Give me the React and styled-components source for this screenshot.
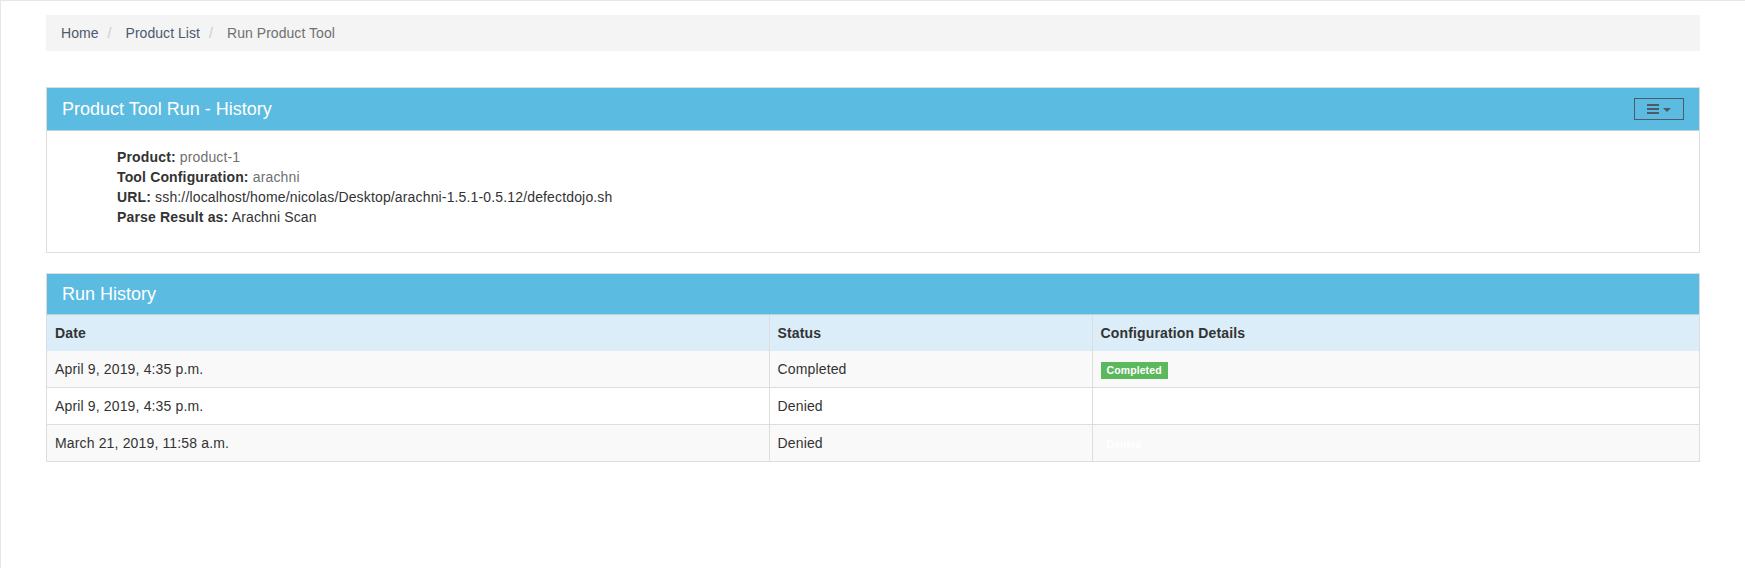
import React from 'react';
import styled, { createGlobalStyle } from 'styled-components';

const GlobalStyle = createGlobalStyle`
  body {
    margin: 0;
    font-family: "Liberation Sans", Arial, sans-serif;
    font-size: 14px;
    line-height: 20px;
    letter-spacing: 0.15px;
    color: #333;
    background: #fff;
  }
`;

const PageWrapper = styled.div`
  min-height: 100vh;
  box-sizing: border-box;
  border-top: 1px solid #e7e7e7;
  border-left: 1px solid #e7e7e7;
  padding: 14px 45px 0 45px;
`;

const Breadcrumb = styled.ol`
  list-style: none;
  display: flex;
  margin: 0 0 36px;
  padding: 8px 15px;
  background: #f4f4f4;
  letter-spacing: 0.05px;
`;

const Crumb = styled.li`
  color: ${(p) => (p.$active ? '#707070' : '#4b5a6e')};
`;

const Separator = styled.li`
  color: #ccc;
  padding: 0 14px 0 9px;
`;

const Panel = styled.section`
  background: #fff;
  border: 1px solid #ddd;
  margin-bottom: 20px;
`;

const PanelHeading = styled.div`
  display: flex;
  align-items: center;
  justify-content: space-between;
  padding: 10px 15px;
  background: #5bbbe0;
  color: #fff;
  border-bottom: 1px solid #b9d3de;
`;

const PanelTitle = styled.h3`
  margin: 0;
  font-size: 18px;
  line-height: 20px;
  font-weight: 400;
  letter-spacing: 0;
`;

const MenuButton = styled.button`
  display: flex;
  align-items: center;
  justify-content: center;
  gap: 4px;
  width: 50px;
  height: 22px;
  box-sizing: border-box;
  padding: 0;
  border: 1px solid #4f5a68;
  background: transparent;
  cursor: pointer;

  svg.caret {
    margin-top: 2px;
  }
`;

const PanelBody = styled.div`
  padding: 16px 15px 25px 70px;
`;

const InfoLine = styled.div`
  b {
    font-weight: 700;
  }
`;

const InfoValue = styled.span`
  color: ${(p) => (p.$muted ? '#707070' : '#333')};
`;

const Table = styled.table`
  width: 100%;
  border-collapse: collapse;
  table-layout: fixed;
`;

const Row = styled.tr`
  background: ${(p) => (p.$head ? '#daedf8' : p.$striped ? '#f9f9f9' : '#fff')};
  border-bottom: 1px solid #ddd;

  &:last-child {
    border-bottom: none;
  }
`;

const Th = styled.th`
  padding: 8px;
  text-align: left;
  font-weight: 700;
  border-left: 1px solid #ddd;

  &:first-child {
    border-left: none;
  }
`;

const Td = styled.td`
  padding: 8px;
  vertical-align: top;
  border-left: 1px solid #ddd;

  &:first-child {
    border-left: none;
  }
`;

const Label = styled.span`
  display: inline;
  padding: 2px 6px 3px;
  font-size: 10.5px;
  font-weight: 700;
  line-height: 1;
  letter-spacing: 0.1px;
  color: #fff;
  background: ${(p) => p.$bg || 'transparent'};
`;

const BarsIcon = () => (
  <svg width="12" height="10" viewBox="0 0 12 10">
    <rect x="0" y="0" width="12" height="2" fill="#4f5a68" />
    <rect x="0" y="4" width="12" height="2" fill="#4f5a68" />
    <rect x="0" y="8" width="12" height="2" fill="#4f5a68" />
  </svg>
);

const CaretIcon = () => (
  <svg className="caret" width="8" height="4" viewBox="0 0 8 4">
    <polygon points="0,0 8,0 4,4" fill="#4f5a68" />
  </svg>
);

const runs = [
  { date: 'April 9, 2019, 4:35 p.m.', status: 'Completed', label: 'Completed', bg: '#5cb85c' },
  { date: 'April 9, 2019, 4:35 p.m.', status: 'Denied' },
  { date: 'March 21, 2019, 11:58 a.m.', status: 'Denied', label: 'Denied' },
];

export default function App() {
  return (
    <>
      <GlobalStyle />
      <PageWrapper>
        <Breadcrumb>
          <Crumb>Home</Crumb>
          <Separator>/</Separator>
          <Crumb>Product List</Crumb>
          <Separator>/</Separator>
          <Crumb $active>Run Product Tool</Crumb>
        </Breadcrumb>

        <Panel>
          <PanelHeading>
            <PanelTitle>Product Tool Run - History</PanelTitle>
            <MenuButton type="button" aria-label="menu">
              <BarsIcon />
              <CaretIcon />
            </MenuButton>
          </PanelHeading>
          <PanelBody>
            <InfoLine>
              <b>Product:</b> <InfoValue $muted>product-1</InfoValue>
            </InfoLine>
            <InfoLine>
              <b>Tool Configuration:</b> <InfoValue $muted>arachni</InfoValue>
            </InfoLine>
            <InfoLine>
              <b>URL:</b> <InfoValue>ssh://localhost/home/nicolas/Desktop/arachni-1.5.1-0.5.12/defectdojo.sh</InfoValue>
            </InfoLine>
            <InfoLine>
              <b>Parse Result as:</b> <InfoValue>Arachni Scan</InfoValue>
            </InfoLine>
          </PanelBody>
        </Panel>

        <Panel>
          <PanelHeading>
            <PanelTitle>Run History</PanelTitle>
          </PanelHeading>
          <Table>
            <colgroup>
              <col style={{ width: '722px' }} />
              <col style={{ width: '323px' }} />
              <col />
            </colgroup>
            <thead>
              <Row $head>
                <Th>Date</Th>
                <Th>Status</Th>
                <Th>Configuration Details</Th>
              </Row>
            </thead>
            <tbody>
              {runs.map((r, i) => (
                <Row key={i} $striped={i % 2 === 0}>
                  <Td>{r.date}</Td>
                  <Td>{r.status}</Td>
                  <Td>{r.label && <Label $bg={r.bg}>{r.label}</Label>}</Td>
                </Row>
              ))}
            </tbody>
          </Table>
        </Panel>
      </PageWrapper>
    </>
  );
}
